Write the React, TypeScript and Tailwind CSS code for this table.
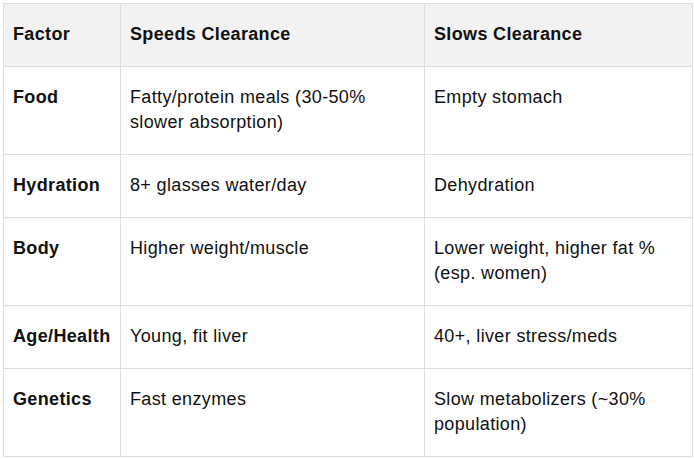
import React from "react";

const rows: [string, string, string][] = [
  ["Food", "Fatty/protein meals (30-50% slower absorption)", "Empty stomach"],
  ["Hydration", "8+ glasses water/day", "Dehydration"],
  ["Body", "Higher weight/muscle", "Lower weight, higher fat % (esp. women)"],
  ["Age/Health", "Young, fit liver", "40+, liver stress/meds"],
  ["Genetics", "Fast enzymes", "Slow metabolizers (~30% population)"],
];

const cell = "border border-[#dddddd] align-top px-[9px] pt-[18px] pb-[19px]";

export default function App() {
  return (
    <div className="bg-white w-[694px] h-[459px] p-[3px] text-[#111] text-[18px] leading-[25px] tracking-[0.35px]" style={{ fontFamily: '"Liberation Sans", Arial, sans-serif' }}>
      <table className="border-collapse table-fixed w-[689px]">
        <colgroup>
          <col className="w-[117px]" />
          <col className="w-[304px]" />
          <col className="w-[268px]" />
        </colgroup>
        <thead>
          <tr className="bg-[#f2f2f2]">
            <th className={`${cell} text-left font-bold`}>Factor</th>
            <th className={`${cell} text-left font-bold`}>Speeds Clearance</th>
            <th className={`${cell} text-left font-bold`}>Slows Clearance</th>
          </tr>
        </thead>
        <tbody>
          {rows.map((r) => (
            <tr key={r[0]}>
              <td className={`${cell} font-bold`}>{r[0]}</td>
              <td className={cell}>{r[1]}</td>
              <td className={cell}>{r[2]}</td>
            </tr>
          ))}
        </tbody>
      </table>
    </div>
  );
}
